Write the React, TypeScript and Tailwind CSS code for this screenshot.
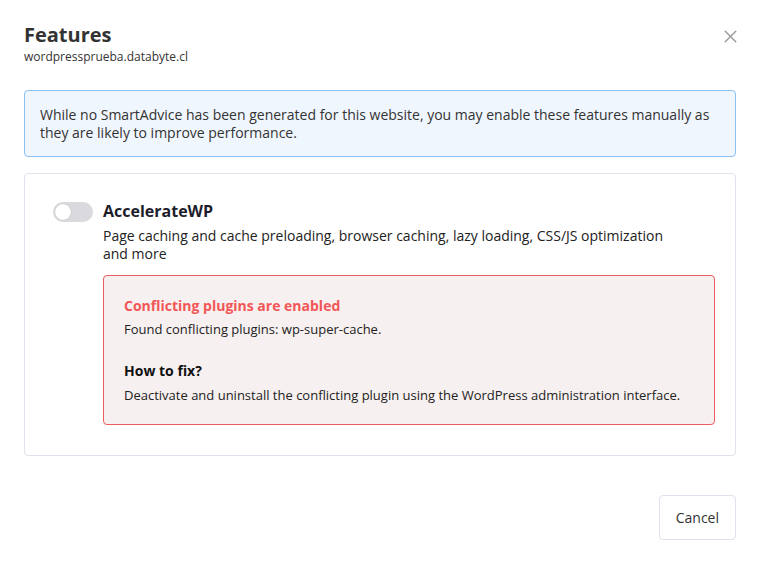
import { X } from "lucide-react";

export default function App() {
  return (
    <div className="flex h-[564px] w-[760px] flex-col bg-white px-6 pt-[21px] pb-6 text-[#333] [font-family:'Open_Sans',sans-serif]">
      <div className="flex items-start justify-between">
        <div>
          <h2 className="text-[20px] font-bold leading-7 text-[#333]">Features</h2>
          <p className="text-[12px] leading-4 text-[#333]">wordpressprueba.databyte.cl</p>
        </div>
        <button className="mt-[5px] -mr-[5px] text-[#999]">
          <X size={21} strokeWidth={1.6} />
        </button>
      </div>

      <div className="mt-[25px] rounded border border-[#88c2f5] bg-[#f0f6fe] px-[15px] pt-[15px] pb-[14px] text-[14px] leading-[18px] text-[#333]">
        While no SmartAdvice has been generated for this website, you may enable these features manually as they are likely to improve performance.
      </div>

      <div className="mt-[16px] flex gap-[10px] rounded border border-[#e2e1ec] pt-[27px] pr-5 pb-[30px] pl-[28px]">
        <button className="relative mt-[1px] h-5 w-10 shrink-0 rounded-full bg-[#d9d9de]">
          <span className="absolute top-[2px] left-[2px] h-4 w-4 rounded-full bg-white shadow-[0_0_1px_rgba(0,0,0,0.3)]" />
        </button>
        <div className="flex-1">
          <h3 className="text-[16px] font-bold leading-5 text-[#1d1d2b]">AccelerateWP</h3>
          <p className="mt-[6px] max-w-[570px] text-[14px] leading-[18px] text-[#222]">
            Page caching and cache preloading, browser caching, lazy loading, CSS/JS optimization and more
          </p>
          <div className="mt-3 rounded border border-[#ec5b5d] bg-[#f7f0f0] px-5 py-5">
            <p className="text-[14px] font-bold leading-5 text-[#f25757]">Conflicting plugins are enabled</p>
            <p className="mt-1 text-[13px] leading-[18px] text-[#222]">Found conflicting plugins: wp-super-cache.</p>
            <p className="mt-[23px] text-[14px] font-bold leading-5 text-[#111]">How to fix?</p>
            <p className="mt-[5px] text-[13px] leading-[18px] text-[#222]">
              Deactivate and uninstall the conflicting plugin using the WordPress administration interface.
            </p>
          </div>
        </div>
      </div>

      <div className="mt-auto flex justify-end">
        <button className="h-[45px] rounded border border-[#e2e1ec] bg-white px-4 text-[14px] text-[#333]">
          Cancel
        </button>
      </div>
    </div>
  );
}
